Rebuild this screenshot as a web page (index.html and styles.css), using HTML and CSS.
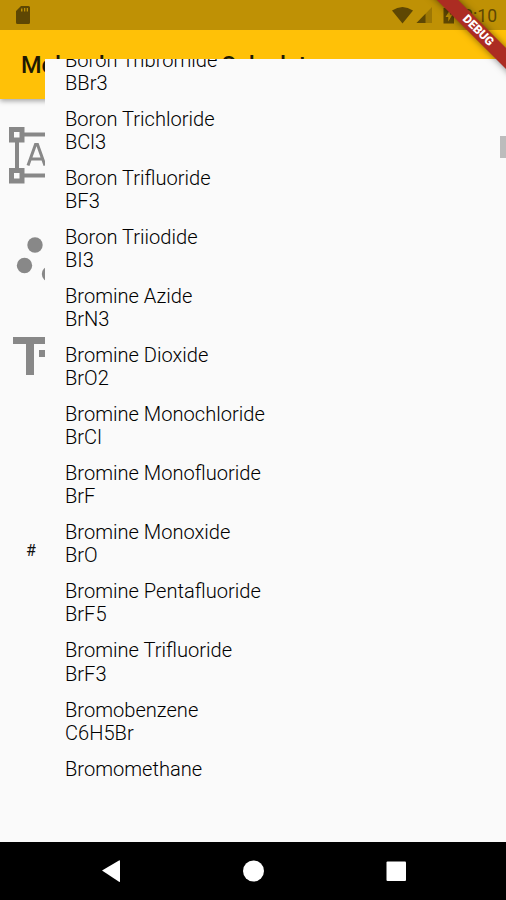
FILE: index.html
```html
<!DOCTYPE html>
<html lang="en">
<head>
<meta charset="utf-8">
<title>Molecular mass Calculator</title>
<link rel="stylesheet" href="styles.css">
</head>
<body>
<div class="phone">
  <header class="appbar">
    <div class="status">
      <svg class="sd" viewBox="0 0 14 18"><path fill-rule="evenodd" d="M5 0h7.500q1.500 0 1.500 1.500v15q0 1.500-1.500 1.500h-11Q0 18 0 16.500V5zM5 2.500v3h1.500v-3zM8 2v3.500h1.300V2zM10.700 2v3.500H12V2z"/></svg>
      <svg class="signals" viewBox="0 0 67 20">
        <path d="M0 4.500Q10.500-2.500 21 4.500L10.500 17.500z"/>
        <path opacity=".35" d="M24.500 17L40 1v16z"/><path d="M24.500 17l9-9.300V17z"/>
        <path fill-rule="evenodd" d="M51.500 2H55V0h4v2h3v15.500H51.500zM58 4l-4.500 7h2.800v4.500l4.200-7H58z"/>
      </svg>
      <span class="clock">8:10</span>
    </div>
    <h1 class="title">Molecular mass Calculator</h1>
  </header>
  <main class="content">
    <nav class="rail">
      <svg viewBox="0 0 45 60"><path class="line" d="M17 17v36M22 14.500h30M22 55.500h30"/><path class="box" d="M11.500 9.500h10.500v10.500h-10.500zM11.500 50.500h10.500v10.500h-10.500z"/><path class="letter" d="M28 45.500L35.500 24.500h2L45 45.500M31 39h11.500"/></svg>
      <svg viewBox="0 0 45 60"><circle cx="35" cy="25" r="7.700"/><circle cx="24.500" cy="45.500" r="7.700"/><circle cx="49.500" cy="54" r="7.700"/></svg>
      <svg viewBox="0 0 45 60"><path d="M13 17h36v7H34v31h-8V24H13zM39 30h10v7H39z"/></svg>
      <span class="hash">#</span>
    </nav>
    <section class="menu">
      <ul>
        <li>Boron Tribromide<br>BBr3</li>
        <li>Boron Trichloride<br>BCl3</li>
        <li>Boron Trifluoride<br>BF3</li>
        <li>Boron Triiodide<br>BI3</li>
        <li>Bromine Azide<br>BrN3</li>
        <li>Bromine Dioxide<br>BrO2</li>
        <li>Bromine Monochloride<br>BrCl</li>
        <li>Bromine Monofluoride<br>BrF</li>
        <li>Bromine Monoxide<br>BrO</li>
        <li>Bromine Pentafluoride<br>BrF5</li>
        <li>Bromine Trifluoride<br>BrF3</li>
        <li>Bromobenzene<br>C6H5Br</li>
        <li>Bromomethane</li>
      </ul>
      <i class="thumb"></i>
    </section>
  </main>
  <footer class="navbar">
    <svg viewBox="0 0 506 58"><path d="M102 28.500L119 18.500q1-.5 1 .7v20q0 1.200-1 .6z"/><circle cx="253.500" cy="29" r="10.500"/><rect x="386.500" y="19.500" width="19.500" height="19.500" rx="1"/></svg>
  </footer>
  <div class="debug">DEBUG</div>
</div>
</body>
</html>
```

FILE: styles.css
```css
* { box-sizing: border-box; }
body { margin: 0; background: #fafafa; font-family: Roboto, "Liberation Sans", sans-serif; }
.phone { position: relative; width: 506px; height: 900px; overflow: hidden; display: flex; flex-direction: column; }
.appbar { height: 99px; background: #ffc107; box-shadow: 0 2px 5px rgba(0,0,0,.35); }
.status { height: 30px; background: #bf9105; display: flex; align-items: flex-start; padding: 6px 9px 0 16px; fill: #5e4703; }
.sd { width: 14px; height: 18px; }
.signals { width: 67px; height: 20px; margin-left: auto; flex: none; overflow: visible; margin-right: 2px; }
.clock { width: 36px; flex: none; font-size: 17.500px; line-height: 20px; color: #5e4703; text-align: right; }
.title { margin: 0; padding-left: 21px; font-size: 23.500px; line-height: 71px; font-weight: 500; color: #1e1903; white-space: nowrap; word-spacing: 13px; }
.content { flex: 1; display: flex; }
.rail { width: 45px; display: flex; flex-direction: column; overflow: hidden; padding-top: 21px; fill: #888; }
.rail svg { width: 45px; height: 60px; margin-bottom: 40px; flex: none; overflow: visible; }
.line { stroke: #888; stroke-width: 4; fill: none; }
.box { stroke: #888; stroke-width: 5; fill: #fafafa; }
.letter { stroke: #888; stroke-width: 3; fill: none; }
.hash { margin: 119px 0 0 26px; font-size: 16px; line-height: 24px; color: #111; }
.menu { position: relative; flex: 1; height: 783px; margin-top: -40px; background: #fafafa; overflow: hidden; }
.menu ul { list-style: none; margin: -10.500px 0 0; padding: 0 0 0 20px; }
.menu li { height: 59.100px; font-size: 20.100px; line-height: 23.100px; font-weight: 300; color: #000; }
.thumb { position: absolute; right: 0; top: 77px; width: 6px; height: 22px; background: #bcbcbc; }
.navbar { height: 58px; background: #000; position: relative; }
.navbar svg { display: block; width: 506px; height: 58px; fill: #fff; }
.debug { position: absolute; left: 408px; top: 23px; width: 140px; height: 15px; background: #ac2c22; color: #fff; font-size: 12px; line-height: 15px; font-weight: 900; text-align: center; transform: rotate(45deg); box-shadow: 0 0 7px rgba(0,0,0,.5); }
```
